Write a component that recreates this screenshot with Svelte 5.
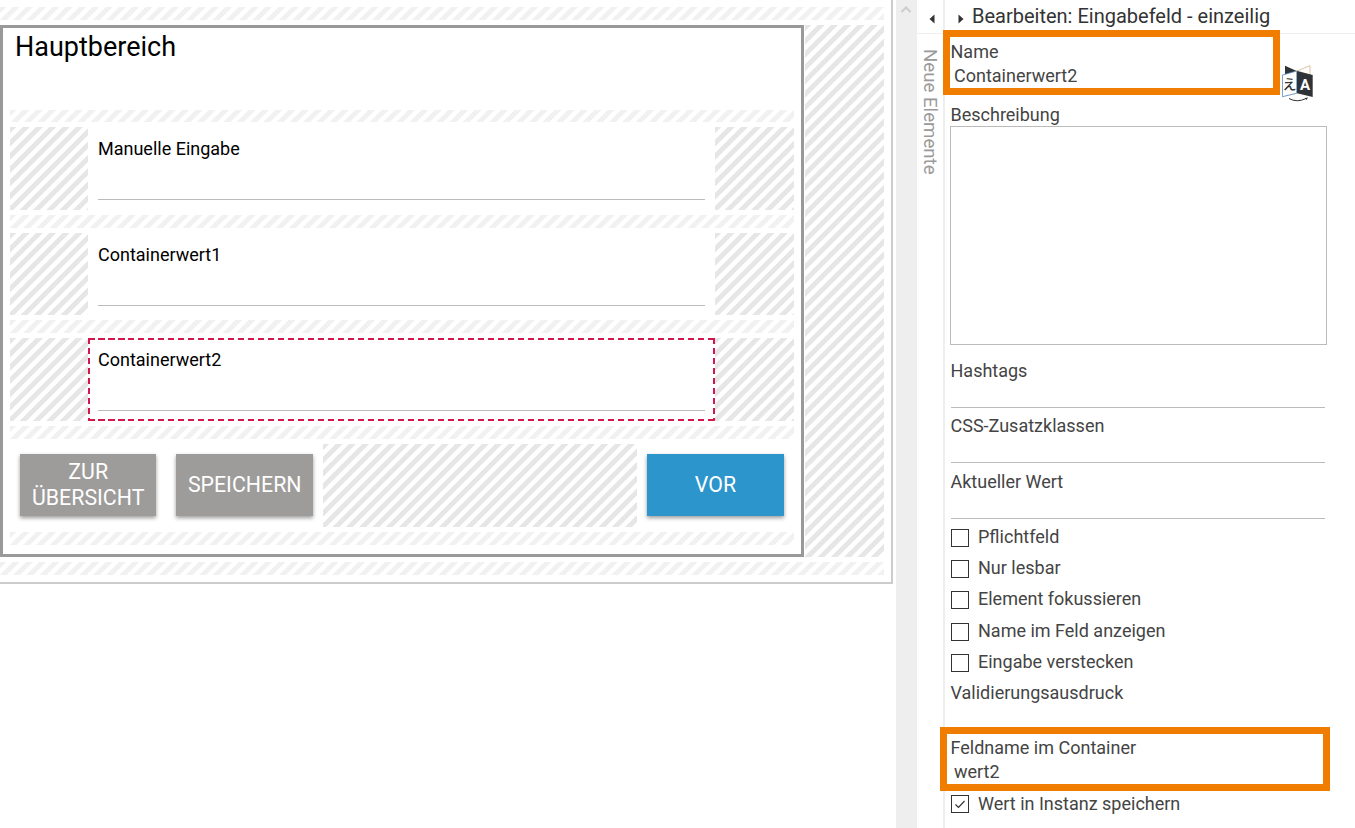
<script>
  const rows = [
    { label: "Manuelle Eingabe" },
    { label: "Containerwert1" },
    { label: "Containerwert2", selected: true },
  ];
  const plainFields = ["Hashtags", "CSS-Zusatzklassen", "Aktueller Wert"];
  const checks = [
    "Pflichtfeld",
    "Nur lesbar",
    "Element fokussieren",
    "Name im Feld anzeigen",
    "Eingabe verstecken",
  ];
</script>

<div class="page">
  <div class="canvas">
    <div class="strip"></div>
    <div class="middle">
      <div class="main-box">
        <div class="title">Hauptbereich</div>
        {#each rows as row}
          <div class="strip"></div>
          <div class="row">
            <div class="hatch"></div>
            <div class="cell" class:selected={row.selected}>
              <div class="cell-label">{row.label}</div>
              <div class="cell-line"></div>
            </div>
            <div class="hatch"></div>
          </div>
        {/each}
        <div class="strip"></div>
        <div class="row buttons">
          <div class="btn-cell"><button class="btn">ZUR ÜBERSICHT</button></div>
          <div class="btn-cell"><button class="btn">SPEICHERN</button></div>
          <div class="hatch"></div>
          <div class="btn-cell"><button class="btn blue">VOR</button></div>
        </div>
        <div class="strip"></div>
      </div>
      <div class="hatch side"></div>
    </div>
    <div class="strip"></div>
  </div>

  <div class="gutter">
    <svg width="21" height="18" viewBox="0 0 21 18">
      <path d="M5.500 12 L10 7.500 L14.500 12" fill="none" stroke="#ccc" stroke-width="2" />
    </svg>
  </div>

  <div class="collapsed">
    <div class="collapsed-top">
      <svg width="6" height="10" viewBox="0 0 6 10"><path d="M5.500 0.500 V9.500 L0.500 5 Z" fill="#333" /></svg>
    </div>
    <div class="vertical">Neue Elemente</div>
  </div>

  <div class="panel">
    <div class="panel-head">
      <svg width="6" height="10" viewBox="0 0 6 10"><path d="M0.500 0.500 V9.500 L5.500 5 Z" fill="#333" /></svg>
      <span>Bearbeiten: Eingabefeld - einzeilig</span>
    </div>

    <div class="panel-body">
      <div class="name-row">
        <div class="marked name-box">
          <div class="lbl">Name</div>
          <div class="val">Containerwert2</div>
        </div>
        <svg class="translate" width="32" height="38" viewBox="0 0 32 38">
          <path d="M3 0.700 L14.700 6 L3 10 Z" fill="#2f3338" />
          <path d="M28 0.700 L15 6 L28 10 Z" fill="#fff" stroke="#d0a878" stroke-width="0.700" />
          <path d="M0.400 10 L14.700 6 V28.300 L0.400 31.700 Z" fill="#fff" stroke="#4f7fb5" stroke-width="0.800" />
          <path d="M15 6 L30.700 10 V32 L15 28.300 Z" fill="#2f3338" />
          <text x="23" y="25" class="glyph-a">A</text>
          <text x="7.500" y="24" class="glyph-j">え</text>
          <path d="M7 33.500 Q15 38 24 33.500" fill="none" stroke="#333" stroke-width="1" />
          <path d="M23 33 L26 32.500 L24.500 35 Z" fill="#333" />
        </svg>
      </div>

      <div class="lbl desc">Beschreibung</div>
      <div class="area"></div>

      {#each plainFields as field, i}
        <div class="lbl plain" class:first={i === 0} class:third={i === 2}>{field}</div>
        <div class="input"></div>
      {/each}

      <div class="checks">
        {#each checks as check}
          <div class="check">
            <span class="box"></span>
            <span>{check}</span>
          </div>
        {/each}
      </div>

      <div class="lbl valid">Validierungsausdruck</div>

      <div class="marked field-box">
        <div class="lbl">Feldname im Container</div>
        <div class="val">wert2</div>
      </div>

      <div class="check last">
        <span class="box">
          <svg width="16" height="16" viewBox="0 0 16 16">
            <path d="M3.500 8.500 L6.500 11.500 L12.500 5" fill="none" stroke="#333" stroke-width="1.200" />
          </svg>
        </span>
        <span>Wert in Instanz speichern</span>
      </div>
    </div>
  </div>
</div>

<style>
  :global(body) {
    margin: 0;
    background: #fff;
  }
  .page {
    display: flex;
    height: 828px;
    width: 1355px;
    overflow: hidden;
    font-family: Roboto, "Liberation Sans", sans-serif;
  }

  /* left canvas */
  .canvas {
    box-sizing: border-box;
    flex: 0 0 893px;
    height: 584px;
    padding: 7px 7px 7px 0;
    border-right: 2px solid #ccc;
    border-bottom: 2px solid #ccc;
    display: flex;
    flex-direction: column;
    gap: 5px;
  }
  .strip {
    height: 13px;
    flex: none;
    background: repeating-linear-gradient(135deg, #f1f1f1 0 4.1px, #fff 4.9px 8.6px, #f1f1f1 9.4px);
  }
  .hatch {
    background: repeating-linear-gradient(135deg, #e6e6e6 0 4.1px, #fff 4.9px 8.6px, #e6e6e6 9.4px);
  }
  .middle {
    display: flex;
    height: 532px;
    flex: none;
  }
  .main-box {
    box-sizing: border-box;
    flex: 0 0 804px;
    border: 3px solid #999;
    padding: 0 7px;
    display: flex;
    flex-direction: column;
    gap: 5px;
    background: #fff;
  }
  .side {
    flex: 1;
    margin-left: 1px;
  }
  .title {
    height: 77px;
    padding: 3px 0 0 5px;
    box-sizing: border-box;
    font-size: 27px;
    line-height: 32px;
    color: #000;
  }
  .title + .strip {
    height: 12px;
  }
  .row {
    display: grid;
    grid-template-columns: 78px 627px 1fr;
    height: 82.67px;
    flex: none;
  }
  .cell {
    box-sizing: border-box;
    padding: 11px 10px 0;
    display: flex;
    flex-direction: column;
  }
  .cell-label {
    font-size: 18px;
    line-height: 22px;
    color: #000;
    height: 61px;
  }
  .cell-line {
    height: 1px;
    background: #bbb;
  }
  .selected {
    --dash: #d4164d;
    background:
      repeating-linear-gradient(90deg, var(--dash) 0 6.5px, transparent 6.5px 10px) top / 100% 2px no-repeat,
      repeating-linear-gradient(90deg, var(--dash) 0 6.5px, transparent 6.5px 10px) bottom / 100% 2px no-repeat,
      repeating-linear-gradient(180deg, var(--dash) 0 6.5px, transparent 6.5px 10px) left / 2px 100% no-repeat,
      repeating-linear-gradient(180deg, var(--dash) 0 6.5px, transparent 6.5px 10px) right / 2px 100% no-repeat;
  }
  .buttons {
    grid-template-columns: 156.4px 156.6px 314px 1fr;
  }
  .btn-cell {
    padding: 10px;
    box-sizing: border-box;
  }
  .btn {
    display: block;
    width: 100%;
    height: 62px;
    border: 0;
    padding: 0 8px;
    background: #9d9c9a;
    color: #fff;
    font: 400 21.33px/26px Roboto, "Liberation Sans", sans-serif;
    box-shadow: 0 2px 4px rgba(0, 0, 0, 0.4);
  }
  .blue {
    background: #2b95cc;
  }

  /* gutter and collapsed column */
  .gutter {
    flex: 0 0 21px;
    margin-left: 3px;
    background: #eee;
    height: 828px;
  }
  .gutter svg {
    display: block;
  }
  .collapsed {
    flex: 0 0 26px;
    height: 828px;
  }
  .collapsed-top {
    box-sizing: border-box;
    height: 34px;
    border-bottom: 1px solid #eee;
    padding: 14px 0 0 12px;
  }
  .collapsed-top svg {
    display: block;
  }
  .vertical {
    writing-mode: vertical-rl;
    font-size: 18.67px;
    line-height: 20px;
    color: #9a9a9a;
    margin: 15px 0 0 3px;
  }

  /* right panel */
  .panel {
    flex: 1;
    border-left: 2px solid #eee;
    color: #444;
  }
  .panel-head {
    box-sizing: border-box;
    height: 34px;
    border-bottom: 1px solid #eee;
    display: flex;
    align-items: flex-start;
    gap: 8px;
    padding-left: 13px;
    color: #333;
    font-size: 20px;
    line-height: 33px;
  }
  .panel-head svg {
    margin-top: 14px;
    flex: none;
  }
  .panel-body {
    padding-left: 6px;
    font-size: 18px;
  }
  .lbl {
    line-height: 24px;
    height: 24px;
    margin-left: -0.5px;
  }
  .val {
    line-height: 24px;
    height: 24px;
    padding-left: 3px;
  }
  .marked {
    box-sizing: border-box;
    border: 7px solid #f07d00;
    position: relative;
  }
  .name-row {
    display: flex;
    align-items: flex-start;
    margin: -4px 0 0 -8px;
  }
  .name-box {
    width: 337px;
    height: 65px;
    padding: 3px 0 0 1px;
  }
  .translate {
    margin: 35px 0 0 2px;
    flex: none;
  }
  .glyph-a {
    font: 700 15px Roboto, sans-serif;
    fill: #fff;
    text-anchor: middle;
  }
  .glyph-j {
    font: 500 14px "Noto Sans CJK JP", sans-serif;
    fill: #333;
    text-anchor: middle;
  }
  .desc {
    margin-top: 0;
  }
  .area {
    box-sizing: border-box;
    width: 377px;
    height: 219px;
    margin: -1px 0 0 -1px;
    border: 1px solid #bbb;
  }
  .plain {
    margin-top: 6px;
  }
  .plain.first {
    margin-top: 14px;
  }
  .plain.third {
    margin-top: 7px;
  }
  .input {
    box-sizing: border-box;
    width: 374px;
    height: 25px;
    border-bottom: 1px solid #bbb;
  }
  .checks {
    margin-top: 2px;
  }
  .checks .box {
    margin-top: 2px;
  }
  .check {
    display: flex;
    align-items: center;
    gap: 9px;
    height: 31.3px;
    line-height: 24px;
  }
  .box {
    box-sizing: border-box;
    flex: none;
    width: 18px;
    height: 18px;
    border: 1px solid #333;
    display: block;
  }
  .box svg {
    display: block;
  }
  .valid {
    margin-top: 4px;
  }
  .field-box {
    width: 390px;
    height: 64px;
    margin: 22px 0 0 -11px;
    padding: 2px 0 0 4px;
  }
  .last {
    margin-top: -3px;
  }
</style>
